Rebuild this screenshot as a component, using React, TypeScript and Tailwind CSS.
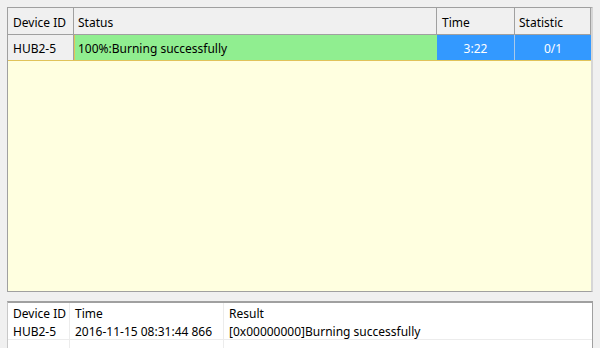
export default function App() {
  return (
    <div
      className="w-[600px] h-[348px] overflow-hidden bg-[#f0f0f0] text-[12px] text-black"
      style={{ fontFamily: '"Noto Sans", "Segoe UI", sans-serif' }}
    >
      {/* Burning table */}
      <div className="ml-[7px] mt-[7px] w-[586px] h-[285px] border border-[#a0a0a0] border-r-2 border-r-[#d6d6d6] bg-[#ffffe0] flex flex-col">
        <div className="flex h-[27px] border-b border-[#a0a0a0] bg-[#f0f0f0] leading-[29px] border-r border-r-[#a0a0a0]">
          <div className="w-[66px] border-r border-[#a0a0a0] pl-[5px]">Device ID</div>
          <div className="w-[363px] border-r border-[#a0a0a0] pl-[4px]">Status</div>
          <div className="w-[78px] border-r border-[#a0a0a0] pl-[5px]">Time</div>
          <div className="flex-1 pl-[4px]">Statistic</div>
        </div>
        <div className="flex h-[26px] border-b border-[#e0c35a] leading-[28px] w-[583px]">
          <div className="w-[66px] border-r border-[#a0a0a0] bg-[#f0f0f0] pl-[5px]">HUB2-5</div>
          <div className="w-[363px] border-l border-[#e0c35a] bg-[#90ee90] pl-[3px]">100%:Burning successfully</div>
          <div className="w-[78px] border-r border-[#a9c9ea] bg-[#3399ff] text-white text-center">3:22</div>
          <div className="flex-1 bg-[#3399ff] text-white text-center">0/1</div>
        </div>
      </div>

      {/* Result log */}
      <div className="ml-[7px] mt-[9px] w-[586px] h-[60px] border-t-2 border-t-[#a0a0a0] border-l border-l-[#c8c8c8] border-r border-r-[#a0a0a0] bg-white">
        <div className="flex h-[18px] leading-[22px]">
          <div className="w-[62px] border-r border-[#ececec] pl-[5px]">Device ID</div>
          <div className="w-[154px] border-r border-[#ececec] pl-[5px]">Time</div>
          <div className="flex-1 pl-[5px]">Result</div>
        </div>
        <div className="flex h-[19px] leading-[22px] border-b border-[#ececec]">
          <div className="w-[62px] border-r border-[#ececec] pl-[5px]">HUB2-5</div>
          <div className="w-[154px] border-r border-[#ececec] pl-[5px]">2016-11-15 08:31:44 866</div>
          <div className="flex-1 pl-[5px]">[0x00000000]Burning successfully</div>
        </div>
        <div className="flex h-[18px]">
          <div className="w-[62px] border-r border-[#ececec]" />
          <div className="w-[154px] border-r border-[#ececec]" />
          <div className="flex-1" />
        </div>
      </div>
    </div>
  )
}
